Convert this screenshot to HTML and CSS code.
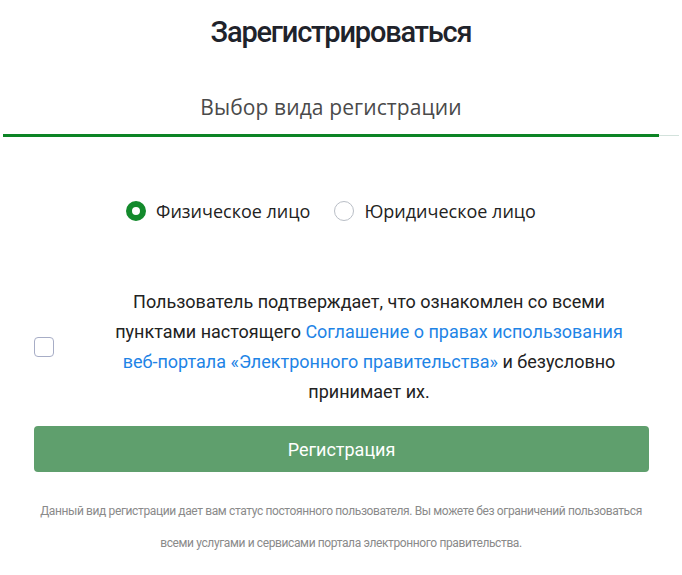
FILE: index.html
```html
<!DOCTYPE html>
<html lang="ru">
<head>
<meta charset="utf-8">
<title>Зарегистрироваться</title>
<link rel="stylesheet" href="styles.css">
</head>
<body>
<main class="page">
  <h1 class="title">Зарегистрироваться</h1>
  <div class="tabs">
    <div class="tab tab-active">Выбор вида регистрации</div>
  </div>
  <div class="panel">
    <div class="radios">
      <label class="radio">
        <span class="radio-dot radio-checked"></span>
        <span class="radio-label">Физическое лицо</span>
      </label>
      <label class="radio">
        <span class="radio-dot"></span>
        <span class="radio-label">Юридическое лицо</span>
      </label>
    </div>
  </div>
  <div class="agree">
    <span class="checkbox"></span>
    <p class="agree-text">Пользователь подтверждает, что ознакомлен со всеми пунктами настоящего <a class="link" href="#">Соглашение о правах использования веб-портала «Электронного правительства»</a> и безусловно принимает их.</p>
  </div>
  <button class="btn" type="button">Регистрация</button>
  <p class="note">Данный вид регистрации дает вам статус постоянного пользователя. Вы можете без ограничений пользоваться всеми услугами и сервисами портала электронного правительства.</p>
</main>
</body>
</html>
```

FILE: styles.css
```css
html, body {
  margin: 0;
  padding: 0;
  background: #ffffff;
}
body {
  font-family: Roboto, "Liberation Sans", sans-serif;
  color: #222;
}
.page {
  width: 682px;
}
.title {
  margin: 0;
  padding-top: 12px;
  text-align: center;
  font-family: Roboto, sans-serif;
  font-weight: 500;
  font-size: 29px;
  line-height: 40px;
  letter-spacing: -1.2px;
  color: #1f232b;
}
.tabs {
  display: flex;
  align-items: flex-end;
  margin: 40px 3px 0 3px;
  border-bottom: 1px solid #d3e2dc;
}
.tab {
  width: 656px;
  text-align: center;
  font-family: "Open Sans", sans-serif;
  font-size: 21px;
  line-height: 28px;
  letter-spacing: 0.1px;
  color: #4a4a4a;
  padding-bottom: 13px;
  padding-top: 1px;
}
.tab-active {
  border-bottom: 3px solid #0c8425;
  margin-bottom: -2px;
}
.panel {
  width: 656px;
  margin-left: 3px;
  padding-top: 63px;
}
.radios {
  display: flex;
  justify-content: center;
  gap: 24px;
  height: 24px;
}
.radio {
  display: flex;
  align-items: center;
  gap: 10px;
  font-family: "Open Sans", sans-serif;
  font-size: 18px;
  color: #222;
}
.radio-dot {
  box-sizing: border-box;
  width: 20px;
  height: 20px;
  border-radius: 50%;
  border: 1px solid #b9bec6;
  background: #fff;
}
.radio-checked {
  border: 6px solid #138a2c;
  background: #fff;
}
.agree {
  display: flex;
  align-items: center;
  margin: 64px 33px 0 34px;
}
.checkbox {
  box-sizing: border-box;
  flex: none;
  width: 20px;
  height: 20px;
  border: 1px solid #a7adc6;
  border-radius: 4px;
  background: #fff;
}
.agree-text {
  flex: 1;
  margin: 0 15px 0 50px;
  text-align: center;
  font-size: 18px;
  line-height: 30px;
  color: #222;
}
.link {
  color: #1e84e6;
  text-decoration: none;
}
.btn {
  display: block;
  box-sizing: border-box;
  width: 615px;
  height: 46px;
  margin: 19px 0 0 34px;
  border: none;
  border-radius: 4px;
  background: #5f9f6d;
  color: #fff;
  font-family: Roboto, sans-serif;
  font-size: 18px;
  cursor: pointer;
}
.note {
  margin: 23px 36px 0 36px;
  text-align: center;
  font-size: 12px;
  line-height: 32px;
  letter-spacing: -0.38px;
  color: #8a8a8a;
}
```
